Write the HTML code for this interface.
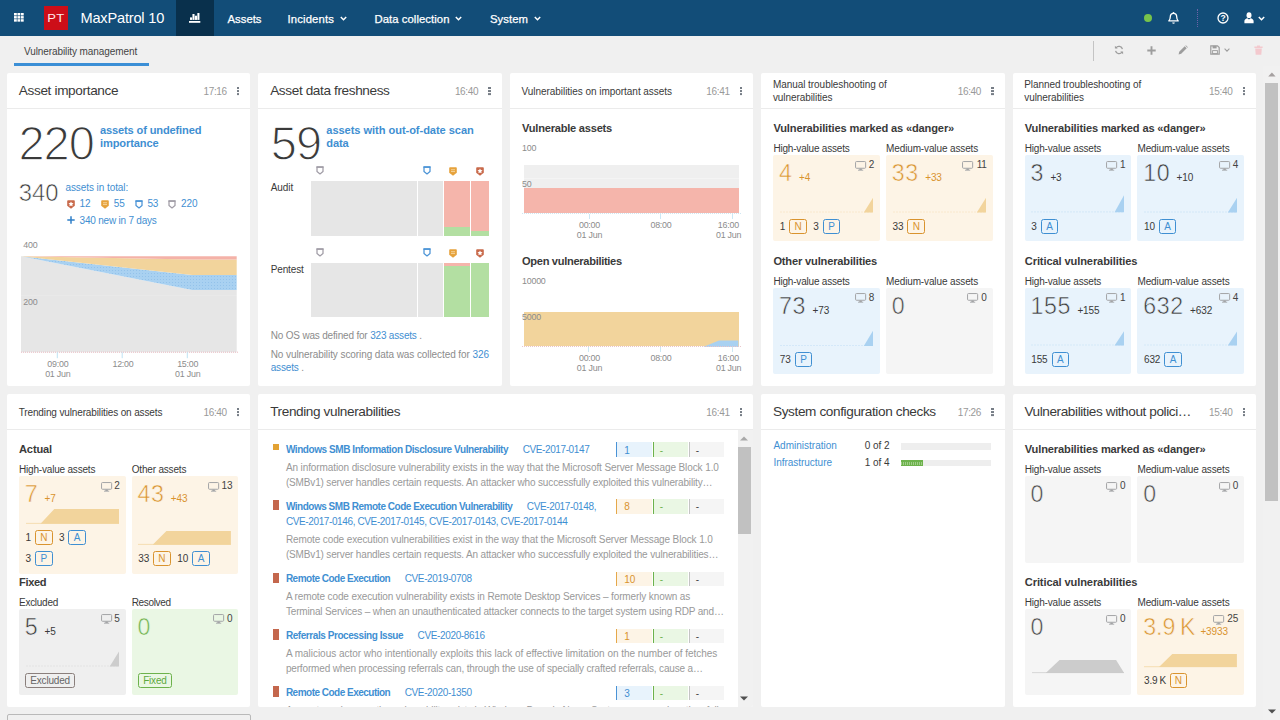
<!DOCTYPE html>
<html lang="en"><head><meta charset="utf-8"><title>MaxPatrol 10 - Vulnerability management</title>
<style>
*{box-sizing:border-box}
html,body{margin:0;padding:0}
body{width:1280px;height:720px;overflow:hidden;background:#f0f0f0;font-family:"Liberation Sans",sans-serif;color:#3a3a3a;position:relative}
.a{position:absolute;white-space:nowrap;display:block}
.t{font-size:10.0px;font-weight:400;letter-spacing:-0.12px;line-height:12px}.tb{font-size:10.0px;font-weight:700;letter-spacing:-0.12px;line-height:12px}.ax{font-size:8.9px;font-weight:400;letter-spacing:-0.22px;line-height:10px}.h{font-size:11.1px;font-weight:700;letter-spacing:-0.25px;line-height:14px}.ttl{font-size:13.6px;font-weight:400;letter-spacing:-0.3px;line-height:18px}.n45{font-size:47px;font-weight:400;letter-spacing:0px;line-height:50px}.n24{font-size:23.8px;font-weight:400;letter-spacing:0px;line-height:28px}.n22{font-size:23.2px;font-weight:400;letter-spacing:0.6px;line-height:26px}.nav{font-size:11.3px;font-weight:400;letter-spacing:-0.2px;line-height:14px}.brand{font-size:14.6px;font-weight:400;letter-spacing:-0.45px;line-height:20px}
#nav{position:absolute;left:0;top:0;width:1280px;height:36px;background:#124d78}
#tabs{position:absolute;left:0;top:36px;width:1280px;height:30px;background:#f0f0f0}
.card{position:absolute;background:#fff;border-radius:2px;overflow:hidden}
.chd{position:absolute;left:0;top:0;right:0;height:36px;border-bottom:1px solid #ebebeb}
.kebab{width:2.4px;height:2.2px;background:#767d86;box-shadow:0 3.05px 0 #767d86,0 6.1px 0 #767d86}
.bdg{border:1px solid;border-radius:2.5px;font-size:10px;line-height:13.6px;text-align:center;letter-spacing:0;background:transparent}
.lnk{color:#3f8fd2}
.cve{font-weight:400;margin-left:14.5px}
</style></head><body>

<nav id="nav">
<svg class="a" style="left:14.2px;top:13.3px" width="10" height="9" viewBox="0 0 10 9"><g fill="#fff"><rect x="0" y="0" width="2.8" height="2.45"/><rect x="3.45" y="0" width="2.8" height="2.45"/><rect x="6.9" y="0" width="2.8" height="2.45"/><rect x="0" y="3.1" width="2.8" height="2.45"/><rect x="3.45" y="3.1" width="2.8" height="2.45"/><rect x="6.9" y="3.1" width="2.8" height="2.45"/><rect x="0" y="6.2" width="2.8" height="2.45"/><rect x="3.45" y="6.2" width="2.8" height="2.45"/><rect x="6.9" y="6.2" width="2.8" height="2.45"/></g></svg>
<div class="a" style="left:44px;top:6px;width:24px;height:24px;background:#cd0e18"><span class="a" style="left:0;top:6.5px;width:24px;text-align:center;color:#ffeceb;font-size:10.4px;font-weight:400;line-height:12px;letter-spacing:.3px;transform:scaleX(1.25)">PT</span></div>
<span class="a brand" style="left:80.5px;top:8px;letter-spacing:-0.20px;color:#fff;">MaxPatrol 10</span>
<div class="a " style="left:176.0px;top:0.0px;width:38.0px;height:36.0px;background:#09304c;"></div>
<svg class="a" style="left:189.0px;top:13.0px" width="12" height="10" viewBox="0 0 12 10"><g fill="#fff"><rect x="1" y="4.4" width="2.1" height="2.5"/><rect x="3.45" y="1" width="2.1" height="5.9"/><rect x="5.9" y="2.7" width="2.1" height="4.2"/><rect x="8.35" y="0" width="2.1" height="6.9"/><rect x="0" y="8" width="11.3" height="1.8"/></g></svg>
<span class="a nav" style="left:227.5px;top:12px;letter-spacing:0.02px;color:#fff;-webkit-text-stroke:.25px #fff;">Assets</span>
<span class="a nav" style="left:287.5px;top:12px;letter-spacing:0.14px;color:#fff;-webkit-text-stroke:.25px #fff;">Incidents</span>
<span class="a nav" style="left:374.5px;top:12px;letter-spacing:0.06px;color:#fff;-webkit-text-stroke:.25px #fff;">Data collection</span>
<span class="a nav" style="left:490.0px;top:12px;letter-spacing:0.05px;color:#fff;-webkit-text-stroke:.25px #fff;">System</span>
<svg class="a" style="left:339.5px;top:15.5px" width="7" height="5" viewBox="0 0 7 5"><path d="M.8 1l2.7 2.7L6.2 1" fill="none" stroke="#fff" stroke-width="1.5"/></svg>
<svg class="a" style="left:455.0px;top:15.5px" width="7" height="5" viewBox="0 0 7 5"><path d="M.8 1l2.7 2.7L6.2 1" fill="none" stroke="#fff" stroke-width="1.5"/></svg>
<svg class="a" style="left:533.5px;top:15.5px" width="7" height="5" viewBox="0 0 7 5"><path d="M.8 1l2.7 2.7L6.2 1" fill="none" stroke="#fff" stroke-width="1.5"/></svg>
<div class="a" style="left:1143.8px;top:13.8px;width:8.5px;height:8.5px;border-radius:50%;background:#77c34b"></div>
<svg class="a" style="left:1167.5px;top:11.5px" width="11" height="13" viewBox="0 0 11 13"><path d="M5.5 1.3c-2 0-3.2 1.5-3.2 3.4 0 2.4-.7 3.4-1.5 4.2h9.4c-.8-.8-1.5-1.8-1.5-4.2 0-1.9-1.2-3.4-3.2-3.4z" fill="none" stroke="#fff" stroke-width="1.3" stroke-linejoin="round"/><circle cx="5.5" cy="1" r=".9" fill="#fff"/><path d="M4.2 10.4a1.3 1.3 0 0 0 2.6 0z" fill="#fff"/></svg>
<div class="a" style="left:1197px;top:9px;width:0;height:18px;border-left:1px dotted #6d62a8"></div>
<svg class="a" style="left:1217.0px;top:12.0px" width="12" height="12" viewBox="0 0 12 12"><circle cx="6" cy="6" r="5" fill="none" stroke="#fff" stroke-width="1.3"/><text x="6" y="9" text-anchor="middle" font-family="Liberation Sans,sans-serif" font-size="8.5" font-weight="700" fill="#fff">?</text></svg>
<svg class="a" style="left:1244.0px;top:12.0px" width="10" height="12" viewBox="0 0 10 12"><ellipse cx="5" cy="3.2" rx="2.5" ry="2.9" fill="#fff"/><path d="M.4 11.2V9.1c0-1.6 1.6-2.6 3-2.9L5 7.5l1.6-1.3c1.4.3 3 1.3 3 2.9v2.1z" fill="#fff"/></svg>
<svg class="a" style="left:1257.8px;top:15.5px" width="7" height="5" viewBox="0 0 7 5"><path d="M.8 1l2.7 2.7L6.2 1" fill="none" stroke="#fff" stroke-width="1.5"/></svg>
</nav>
<div id="tabs">
<span class="a t" style="left:24.0px;top:10px;letter-spacing:-0.09px;color:#444;">Vulnerability management</span>
<div class="a " style="left:14.0px;top:27.0px;width:135.0px;height:3.0px;background:#3b8fd6;"></div>
<div class="a " style="left:1093.0px;top:5.0px;width:1.0px;height:20.0px;background:#c4c4c4;"></div>
<svg class="a" style="left:1114.0px;top:9.4px" width="10" height="10" viewBox="0 0 10 10"><path d="M8.4 4.2A3.5 3.5 0 0 0 2 3M1.6 5.8A3.5 3.5 0 0 0 8 7" fill="none" stroke="#9d9d9d" stroke-width="1.3"/><path d="M.9.8v2.8h2.8zM9.1 9.2V6.4H6.3z" fill="#9d9d9d"/></svg>
<svg class="a" style="left:1146.5px;top:9.9px" width="9" height="9" viewBox="0 0 9 9"><path d="M4.5.3v8.4M.3 4.5h8.4" stroke="#9d9d9d" stroke-width="1.9"/></svg>
<svg class="a" style="left:1177.5px;top:9.4px" width="10" height="10" viewBox="0 0 10 10"><path d="M.6 9.4l.6-2.6L6.7 1.3l2 2L3.2 8.8zM7.4.7l.5-.4 2 2-.5.4z" fill="#9d9d9d"/></svg>
<svg class="a" style="left:1210.0px;top:9.4px" width="10" height="10" viewBox="0 0 10 10"><path d="M.8.8h6.7l1.7 1.7v6.7H.8z" fill="none" stroke="#9d9d9d" stroke-width="1.2"/><rect x="2.6" y=".8" width="4" height="2.6" fill="#9d9d9d"/><rect x="2.6" y="5.6" width="4.8" height="3" fill="none" stroke="#9d9d9d" stroke-width=".9"/></svg>
<svg class="a" style="left:1224.0px;top:12.4px" width="6" height="4" viewBox="0 0 6 4"><path d="M.6.7L3 3.1 5.4.7" fill="none" stroke="#9d9d9d" stroke-width="1.1"/></svg>
<svg class="a" style="left:1253.5px;top:8.9px" width="9" height="10" viewBox="0 0 9 10"><path d="M.4 1.6h8.2v1.3H.4zM3 .4h3v1.2H3zM1.2 3.4h6.6L7.3 9.7H1.7z" fill="#f3c9ce"/></svg>
</div>
<section class="card" style="left:7px;top:73px;width:243.4px;height:313px">
<header class="chd"></header>
<span class="a ttl" style="left:11.8px;top:9px;letter-spacing:-0.35px;color:#3a3a3a;">Asset importance</span>
<span class="a t" style="right:23.6px;top:13px;color:#999;letter-spacing:-.35px;">17:16</span>
<i class="a kebab" style="left:230.0px;top:13.9px"></i>
<span class="a n45" style="left:11.4px;top:46px;color:#3a3a3a;-webkit-text-stroke:1.3px #fff;letter-spacing:-1px;transform:scaleY(1.03);transform-origin:0 41px;">220</span>
<span class="a h" style="left:93.0px;top:50px;letter-spacing:-0.15px;color:#3f8fd2;">assets of undefined</span>
<span class="a h" style="left:93.0px;top:63px;letter-spacing:-0.12px;color:#3f8fd2;">importance</span>
<span class="a n24" style="left:11.8px;top:106px;color:#3a3a3a;-webkit-text-stroke:.6px #fff;">340</span>
<span class="a t" style="left:58.4px;top:109px;letter-spacing:-0.07px;color:#3f8fd2;">assets in total:</span>
<svg class="a" style="left:59.8px;top:127.4px" width="8" height="9" viewBox="0 0 8 9"><path d="M.2 .8L1 .2h6l.8.6v4.9L4 8.7.2 5.7z" fill="#c8694a"/><path d="M4 1.5l.8 1.6 1.75.2-1.3 1.2.35 1.75L4 5.4l-1.6.85.35-1.75-1.3-1.2 1.75-.2z" fill="#fff"/></svg>
<span class="a t" style="left:72.6px;top:125px;color:#3f8fd2;">12</span>
<svg class="a" style="left:94.0px;top:127.4px" width="8" height="9" viewBox="0 0 8 9"><path d="M.2 .8L1 .2h6l.8.6v4.9L4 8.7.2 5.7z" fill="#e6a23c"/><path d="M2 3.2l1-.9 1 .9 1-.9 1 .9M2 5l1-.9 1 .9 1-.9 1 .9" fill="none" stroke="#fbe6bf" stroke-width=".7"/></svg>
<span class="a t" style="left:106.8px;top:125px;color:#3f8fd2;">55</span>
<svg class="a" style="left:128.0px;top:127.2px" width="8" height="9" viewBox="0 0 8 9"><path d="M1 1.1h6v4.5L4 7.9 1 5.6z" fill="#fff" stroke="#4a93d6" stroke-width="1.25" stroke-linejoin="round"/><path d="M.4 1h7.2" stroke="#4a93d6" stroke-width="1.6"/></svg>
<span class="a t" style="left:140.4px;top:125px;color:#3f8fd2;">53</span>
<svg class="a" style="left:161.2px;top:127.2px" width="8" height="9" viewBox="0 0 8 9"><path d="M1 1.1h6v4.5L4 7.9 1 5.6z" fill="#fff" stroke="#a09ca6" stroke-width="1.25" stroke-linejoin="round"/><path d="M.4 1h7.2" stroke="#a09ca6" stroke-width="1.6"/></svg>
<span class="a t" style="left:174.0px;top:125px;color:#3f8fd2;">220</span>
<svg class="a" style="left:60.0px;top:143.3px" width="8" height="8" viewBox="0 0 8 8"><path d="M4 .3v7.4M.3 4h7.4" stroke="#2f7fc8" stroke-width="1.5"/></svg>
<span class="a t" style="left:72.6px;top:142px;letter-spacing:-0.21px;color:#3f8fd2;">340 new in 7 days</span>
<svg class="a" style="left:14.0px;top:157.0px" width="218" height="130" viewBox="0 0 218 130"><defs><pattern id="dots" width="3" height="3" patternUnits="userSpaceOnUse"><rect width="3" height="3" fill="#a9d1f1"/><rect x="1" y="1" width="1" height="1" fill="#93c2ea"/></pattern></defs><path d="M0 122.2V26.2L171.2 60.1H215.7V122.2z" fill="#e6e6e6"/><path d="M0 26.2L171.2 45.1H215.7V60.1H171.2z" fill="url(#dots)"/><path d="M0 26.2L171.2 29.6H215.7V45.1H171.2z" fill="#f2d49c"/><path d="M0 26.2H215.7V29.6H171.2z" fill="#f4b2a8"/><path d="M-2 65.7H217.7" stroke="#fff" stroke-opacity=".15" stroke-width="1"/><path d="M0 122.2H217.7" stroke="#e9b8c0" stroke-width="1" stroke-dasharray="1 1"/><path d="M36.3 122.2v6" stroke="#bfe3f4" stroke-width="1"/><path d="M101.2 122.2v6" stroke="#bfe3f4" stroke-width="1"/><path d="M166.3 122.2v6" stroke="#bfe3f4" stroke-width="1"/></svg>
<span class="a ax" style="left:16.3px;top:167px;color:#8c8c8c;">400</span>
<span class="a ax" style="left:16.3px;top:224px;color:#8c8c8c;">200</span>
<span class="a ax" style="left:10.8px;width:80px;text-align:center;top:286px;color:#8c8c8c;">09:00</span>
<span class="a ax" style="left:10.8px;width:80px;text-align:center;top:296px;color:#8c8c8c;">01 Jun</span>
<span class="a ax" style="left:76.0px;width:80px;text-align:center;top:286px;color:#8c8c8c;">12:00</span>
<span class="a ax" style="left:140.7px;width:80px;text-align:center;top:286px;color:#8c8c8c;">15:00</span>
<span class="a ax" style="left:140.7px;width:80px;text-align:center;top:296px;color:#8c8c8c;">01 Jun</span>
</section>
<section class="card" style="left:258.4px;top:73px;width:243.4px;height:313px">
<header class="chd"></header>
<span class="a ttl" style="left:11.8px;top:9px;letter-spacing:-0.38px;color:#3a3a3a;">Asset data freshness</span>
<span class="a t" style="right:23.6px;top:13px;color:#999;letter-spacing:-.35px;">16:40</span>
<i class="a kebab" style="left:230.0px;top:13.9px"></i>
<span class="a n45" style="left:12.4px;top:46px;color:#3a3a3a;-webkit-text-stroke:1.3px #fff;letter-spacing:-1px;transform:scaleY(1.03);transform-origin:0 41px;">59</span>
<span class="a h" style="left:67.9px;top:50px;letter-spacing:-0.06px;color:#3f8fd2;">assets with out-of-date scan</span>
<span class="a h" style="left:67.9px;top:63px;letter-spacing:-0.15px;color:#3f8fd2;">data</span>
<svg class="a" style="left:57.4px;top:93.0px" width="8" height="9" viewBox="0 0 8 9"><path d="M1 1.1h6v4.5L4 7.9 1 5.6z" fill="#fff" stroke="#a09ca6" stroke-width="1.25" stroke-linejoin="round"/><path d="M.4 1h7.2" stroke="#a09ca6" stroke-width="1.6"/></svg>
<svg class="a" style="left:164.4px;top:93.0px" width="8" height="9" viewBox="0 0 8 9"><path d="M1 1.1h6v4.5L4 7.9 1 5.6z" fill="#fff" stroke="#4a93d6" stroke-width="1.25" stroke-linejoin="round"/><path d="M.4 1h7.2" stroke="#4a93d6" stroke-width="1.6"/></svg>
<svg class="a" style="left:190.2px;top:93.9px" width="8" height="9" viewBox="0 0 8 9"><path d="M.2 .8L1 .2h6l.8.6v4.9L4 8.7.2 5.7z" fill="#e6a23c"/><path d="M2 3.2l1-.9 1 .9 1-.9 1 .9M2 5l1-.9 1 .9 1-.9 1 .9" fill="none" stroke="#fbe6bf" stroke-width=".7"/></svg>
<svg class="a" style="left:217.4px;top:93.9px" width="8" height="9" viewBox="0 0 8 9"><path d="M.2 .8L1 .2h6l.8.6v4.9L4 8.7.2 5.7z" fill="#c8694a"/><path d="M4 1.5l.8 1.6 1.75.2-1.3 1.2.35 1.75L4 5.4l-1.6.85.35-1.75-1.3-1.2 1.75-.2z" fill="#fff"/></svg>
<svg class="a" style="left:57.4px;top:175.2px" width="8" height="9" viewBox="0 0 8 9"><path d="M1 1.1h6v4.5L4 7.9 1 5.6z" fill="#fff" stroke="#a09ca6" stroke-width="1.25" stroke-linejoin="round"/><path d="M.4 1h7.2" stroke="#a09ca6" stroke-width="1.6"/></svg>
<svg class="a" style="left:164.4px;top:175.2px" width="8" height="9" viewBox="0 0 8 9"><path d="M1 1.1h6v4.5L4 7.9 1 5.6z" fill="#fff" stroke="#4a93d6" stroke-width="1.25" stroke-linejoin="round"/><path d="M.4 1h7.2" stroke="#4a93d6" stroke-width="1.6"/></svg>
<svg class="a" style="left:190.2px;top:176.1px" width="8" height="9" viewBox="0 0 8 9"><path d="M.2 .8L1 .2h6l.8.6v4.9L4 8.7.2 5.7z" fill="#e6a23c"/><path d="M2 3.2l1-.9 1 .9 1-.9 1 .9M2 5l1-.9 1 .9 1-.9 1 .9" fill="none" stroke="#fbe6bf" stroke-width=".7"/></svg>
<svg class="a" style="left:217.4px;top:176.1px" width="8" height="9" viewBox="0 0 8 9"><path d="M.2 .8L1 .2h6l.8.6v4.9L4 8.7.2 5.7z" fill="#c8694a"/><path d="M4 1.5l.8 1.6 1.75.2-1.3 1.2.35 1.75L4 5.4l-1.6.85.35-1.75-1.3-1.2 1.75-.2z" fill="#fff"/></svg>
<span class="a t" style="left:12.4px;top:109px;letter-spacing:-0.08px;color:#3a3a3a;">Audit</span>
<span class="a t" style="left:12.4px;top:191px;letter-spacing:-0.15px;color:#3a3a3a;">Pentest</span>
<div class="a " style="left:52.6px;top:108.0px;width:106.0px;height:55.0px;background:#e6e6e6;"></div>
<div class="a " style="left:159.6px;top:108.0px;width:25.0px;height:55.0px;background:#e6e6e6;"></div>
<div class="a " style="left:185.6px;top:108.0px;width:25.8px;height:46.0px;background:#f5b5ab;"></div>
<div class="a " style="left:185.6px;top:154.0px;width:25.8px;height:9.0px;background:#b3dfa2;"></div>
<div class="a " style="left:212.8px;top:108.0px;width:17.8px;height:50.0px;background:#f5b5ab;"></div>
<div class="a " style="left:212.8px;top:158.0px;width:17.8px;height:5.0px;background:#b3dfa2;"></div>
<div class="a " style="left:52.6px;top:190.0px;width:106.0px;height:54.0px;background:#e6e6e6;"></div>
<div class="a " style="left:159.6px;top:190.0px;width:25.0px;height:54.0px;background:#e6e6e6;"></div>
<div class="a " style="left:185.6px;top:190.0px;width:25.8px;height:3.0px;background:#f5b5ab;"></div>
<div class="a " style="left:185.6px;top:193.0px;width:25.8px;height:51.0px;background:#b3dfa2;"></div>
<div class="a " style="left:212.8px;top:190.0px;width:17.8px;height:54.0px;background:#b3dfa2;"></div>
<span class="a t" style="left:12.3px;top:257px;letter-spacing:-0.18px;color:#8c8c8c;">No OS was defined for <span class="lnk">323 assets</span> .</span>
<span class="a t" style="left:12.3px;top:276px;letter-spacing:-0.08px;color:#8c8c8c;">No vulnerability scoring data was collected for <span class="lnk">326</span></span>
<span class="a t" style="left:12.3px;top:289px;letter-spacing:-0.15px;color:#8c8c8c;"><span class="lnk">assets</span> .</span>
</section>
<section class="card" style="left:509.8px;top:73px;width:243.4px;height:313px">
<header class="chd"></header>
<span class="a t" style="left:11.7px;top:13px;letter-spacing:-0.04px;color:#3a3a3a;">Vulnerabilities on important assets</span>
<span class="a t" style="right:23.6px;top:13px;color:#999;letter-spacing:-.35px;">16:41</span>
<i class="a kebab" style="left:230.0px;top:13.9px"></i>
<span class="a h" style="left:12.2px;top:48px;letter-spacing:-0.23px;color:#3a3a3a;">Vulnerable assets</span>
<span class="a ax" style="left:12.2px;top:70px;color:#8c8c8c;">100</span>
<div class="a " style="left:14.1px;top:92.2px;width:214.9px;height:22.8px;background:#efefef;"></div>
<div class="a " style="left:14.1px;top:115.0px;width:214.9px;height:25.3px;background:#f5b5ab;"></div>
<div class="a " style="left:12.2px;top:105.3px;width:219.0px;height:1.0px;background:rgba(255,255,255,.3);"></div>
<span class="a ax" style="left:12.2px;top:106px;color:#8c8c8c;">50</span>
<div class="a" style="left:12.2px;top:140.0px;width:219px;height:0;border-top:1px dotted #cfe6f2"></div>
<div class="a " style="left:79.0px;top:140.5px;width:1.0px;height:5.5px;background:#cbe8f5;"></div>
<div class="a " style="left:150.5px;top:140.5px;width:1.0px;height:5.5px;background:#cbe8f5;"></div>
<div class="a " style="left:221.9px;top:140.5px;width:1.0px;height:5.5px;background:#cbe8f5;"></div>
<span class="a ax" style="left:39.7px;width:80px;text-align:center;top:147px;color:#8c8c8c;">00:00</span>
<span class="a ax" style="left:39.7px;width:80px;text-align:center;top:157px;color:#8c8c8c;">01 Jun</span>
<span class="a ax" style="left:111.2px;width:80px;text-align:center;top:147px;color:#8c8c8c;">08:00</span>
<span class="a ax" style="left:178.5px;width:80px;text-align:center;top:147px;color:#8c8c8c;">16:00</span>
<span class="a ax" style="left:178.8px;width:80px;text-align:center;top:157px;color:#8c8c8c;">01 Jun</span>
<span class="a h" style="left:12.2px;top:181px;letter-spacing:-0.31px;color:#3a3a3a;">Open vulnerabilities</span>
<span class="a ax" style="left:12.2px;top:203px;color:#8c8c8c;">10000</span>
<div class="a " style="left:14.1px;top:238.8px;width:214.9px;height:34.6px;background:#f2d49c;"></div>
<svg class="a" style="left:193.6px;top:266.5px" width="36" height="7" viewBox="0 0 36 7"><path d="M0 7L16 .5H35.4V7z" fill="#a9d1f1"/></svg>
<span class="a ax" style="left:12.2px;top:239px;color:#8c8c8c;">5000</span>
<div class="a" style="left:12.2px;top:273.2px;width:219px;height:0;border-top:1px dotted #e9c6cc"></div>
<div class="a " style="left:78.7px;top:273.8px;width:1.0px;height:5.5px;background:#cbe8f5;"></div>
<div class="a " style="left:150.7px;top:273.8px;width:1.0px;height:5.5px;background:#cbe8f5;"></div>
<div class="a " style="left:222.0px;top:273.8px;width:1.0px;height:5.5px;background:#cbe8f5;"></div>
<span class="a ax" style="left:39.7px;width:80px;text-align:center;top:280px;color:#8c8c8c;">00:00</span>
<span class="a ax" style="left:39.7px;width:80px;text-align:center;top:290px;color:#8c8c8c;">01 Jun</span>
<span class="a ax" style="left:111.2px;width:80px;text-align:center;top:280px;color:#8c8c8c;">08:00</span>
<span class="a ax" style="left:178.5px;width:80px;text-align:center;top:280px;color:#8c8c8c;">16:00</span>
<span class="a ax" style="left:178.8px;width:80px;text-align:center;top:290px;color:#8c8c8c;">01 Jun</span>
</section>
<section class="card" style="left:761.2px;top:73px;width:243.4px;height:313px">
<header class="chd"></header>
<span class="a t" style="left:11.7px;top:6px;letter-spacing:-0.05px;color:#3a3a3a;">Manual troubleshooting of</span>
<span class="a t" style="left:11.7px;top:19px;letter-spacing:-0.07px;color:#3a3a3a;">vulnerabilities</span>
<span class="a t" style="right:23.6px;top:13px;color:#999;letter-spacing:-.35px;">16:40</span>
<i class="a kebab" style="left:230.0px;top:13.9px"></i>
<span class="a h" style="left:12.2px;top:48px;letter-spacing:-0.15px;color:#3a3a3a;">Vulnerabilities marked as «danger»</span>
<span class="a t" style="left:12.2px;top:70px;letter-spacing:-0.19px;color:#3a3a3a;">High-value assets</span>
<span class="a t" style="left:124.9px;top:70px;letter-spacing:-0.13px;color:#3a3a3a;">Medium-value assets</span>
<div class="a " style="left:12.2px;top:82.2px;width:106.5px;height:86.2px;background:#fdf4e6;border-radius:2px;"></div>
<span class="a n22" style="left:17.9px;top:87px;color:#d9932e;-webkit-text-stroke:.55px #fdf4e6;">4</span>
<span class="a t" style="left:37.8px;top:99px;color:#d9932e;">+4</span>
<span class="a t" style="right:130.5px;top:86px;color:#444;">2</span>
<svg class="a" style="left:93.6px;top:88.3px" width="12" height="10" viewBox="0 0 12 10"><rect x="0.55" y="0.55" width="10.1" height="6.7" rx="0.9" fill="none" stroke="#a3a4a6" stroke-width="1"/><path d="M3 9.2h5.2" stroke="#a3a4a6" stroke-width=".9"/><path d="M4.6 7.4l-.4 1.5h2.8l-.4-1.5z" fill="#a3a4a6"/></svg>
<svg class="a" style="left:18.6px;top:123.2px" width="93.4" height="17.4"><path d="M83.8 16.4L93.4 1V16.4z" fill="#f2d49c"/><path d="M0 16.0H93.4" stroke="#f2d49c" stroke-width=".8" opacity=".4" stroke-dasharray="2 1"/></svg>
<span class="a t" style="left:18.6px;top:148px;color:#3a3a3a;">1</span>
<span class="a bdg" style="left:28.1px;top:145.9px;width:17.6px;height:14.7px;border-color:#d9932e;color:#d9932e;">N</span>
<span class="a t" style="left:52.1px;top:148px;color:#3a3a3a;">3</span>
<span class="a bdg" style="left:61.5px;top:145.9px;width:17.6px;height:14.7px;border-color:#3f8fd2;color:#3f8fd2;">P</span>
<div class="a " style="left:124.9px;top:82.2px;width:106.5px;height:86.2px;background:#fdf4e6;border-radius:2px;"></div>
<span class="a n22" style="left:130.6px;top:87px;color:#d9932e;-webkit-text-stroke:.55px #fdf4e6;">33</span>
<span class="a t" style="left:164.0px;top:99px;color:#d9932e;">+33</span>
<span class="a t" style="right:17.8px;top:86px;color:#444;">11</span>
<svg class="a" style="left:200.9px;top:88.3px" width="12" height="10" viewBox="0 0 12 10"><rect x="0.55" y="0.55" width="10.1" height="6.7" rx="0.9" fill="none" stroke="#a3a4a6" stroke-width="1"/><path d="M3 9.2h5.2" stroke="#a3a4a6" stroke-width=".9"/><path d="M4.6 7.4l-.4 1.5h2.8l-.4-1.5z" fill="#a3a4a6"/></svg>
<svg class="a" style="left:131.4px;top:123.2px" width="93.4" height="17.4"><path d="M83.8 16.4L93.4 1V16.4z" fill="#f2d49c"/><path d="M0 16.0H93.4" stroke="#f2d49c" stroke-width=".8" opacity=".4" stroke-dasharray="2 1"/></svg>
<span class="a t" style="left:131.4px;top:148px;color:#3a3a3a;">33</span>
<span class="a bdg" style="left:146.3px;top:145.9px;width:17.6px;height:14.7px;border-color:#d9932e;color:#d9932e;">N</span>
<span class="a h" style="left:12.2px;top:181px;letter-spacing:-0.17px;color:#3a3a3a;">Other vulnerabilities</span>
<span class="a t" style="left:12.2px;top:203px;letter-spacing:-0.19px;color:#3a3a3a;">High-value assets</span>
<span class="a t" style="left:124.9px;top:203px;letter-spacing:-0.13px;color:#3a3a3a;">Medium-value assets</span>
<div class="a " style="left:12.2px;top:215.2px;width:106.5px;height:85.6px;background:#e8f3fc;border-radius:2px;"></div>
<span class="a n22" style="left:17.9px;top:220px;color:#3a3a3a;-webkit-text-stroke:.55px #e8f3fc;">73</span>
<span class="a t" style="left:51.3px;top:232px;color:#3a3a3a;">+73</span>
<span class="a t" style="right:130.5px;top:219px;color:#444;">8</span>
<svg class="a" style="left:93.6px;top:220.4px" width="12" height="10" viewBox="0 0 12 10"><rect x="0.55" y="0.55" width="10.1" height="6.7" rx="0.9" fill="none" stroke="#a3a4a6" stroke-width="1"/><path d="M3 9.2h5.2" stroke="#a3a4a6" stroke-width=".9"/><path d="M4.6 7.4l-.4 1.5h2.8l-.4-1.5z" fill="#a3a4a6"/></svg>
<svg class="a" style="left:18.6px;top:255.5px" width="93.4" height="17.9"><path d="M83.8 16.9L93.4 1V16.9z" fill="#a9d1f1"/><path d="M0 16.5H93.4" stroke="#a9d1f1" stroke-width=".8" opacity=".4" stroke-dasharray="2 1"/></svg>
<span class="a t" style="left:18.6px;top:281px;color:#3a3a3a;">73</span>
<span class="a bdg" style="left:33.5px;top:278.9px;width:17.6px;height:14.7px;border-color:#3f8fd2;color:#3f8fd2;">P</span>
<div class="a " style="left:124.9px;top:215.2px;width:106.5px;height:85.6px;background:#f5f5f5;border-radius:2px;"></div>
<span class="a n22" style="left:130.6px;top:220px;color:#4a4a4a;-webkit-text-stroke:.55px #f5f5f5;">0</span>
<span class="a t" style="right:17.8px;top:219px;color:#444;">0</span>
<svg class="a" style="left:206.3px;top:220.4px" width="12" height="10" viewBox="0 0 12 10"><rect x="0.55" y="0.55" width="10.1" height="6.7" rx="0.9" fill="none" stroke="#a3a4a6" stroke-width="1"/><path d="M3 9.2h5.2" stroke="#a3a4a6" stroke-width=".9"/><path d="M4.6 7.4l-.4 1.5h2.8l-.4-1.5z" fill="#a3a4a6"/></svg>
</section>
<section class="card" style="left:1012.6px;top:73px;width:243.4px;height:313px">
<header class="chd"></header>
<span class="a t" style="left:11.7px;top:6px;letter-spacing:-0.08px;color:#3a3a3a;">Planned troubleshooting of</span>
<span class="a t" style="left:11.7px;top:19px;letter-spacing:-0.07px;color:#3a3a3a;">vulnerabilities</span>
<span class="a t" style="right:23.6px;top:13px;color:#999;letter-spacing:-.35px;">15:40</span>
<i class="a kebab" style="left:230.0px;top:13.9px"></i>
<span class="a h" style="left:12.2px;top:48px;letter-spacing:-0.15px;color:#3a3a3a;">Vulnerabilities marked as «danger»</span>
<span class="a t" style="left:12.2px;top:70px;letter-spacing:-0.19px;color:#3a3a3a;">High-value assets</span>
<span class="a t" style="left:124.9px;top:70px;letter-spacing:-0.13px;color:#3a3a3a;">Medium-value assets</span>
<div class="a " style="left:12.2px;top:82.2px;width:106.5px;height:86.2px;background:#e8f3fc;border-radius:2px;"></div>
<span class="a n22" style="left:17.9px;top:87px;color:#3a3a3a;-webkit-text-stroke:.55px #e8f3fc;">3</span>
<span class="a t" style="left:37.8px;top:99px;color:#3a3a3a;">+3</span>
<span class="a t" style="right:130.5px;top:86px;color:#444;">1</span>
<svg class="a" style="left:93.6px;top:88.3px" width="12" height="10" viewBox="0 0 12 10"><rect x="0.55" y="0.55" width="10.1" height="6.7" rx="0.9" fill="none" stroke="#a3a4a6" stroke-width="1"/><path d="M3 9.2h5.2" stroke="#a3a4a6" stroke-width=".9"/><path d="M4.6 7.4l-.4 1.5h2.8l-.4-1.5z" fill="#a3a4a6"/></svg>
<svg class="a" style="left:18.6px;top:121.3px" width="93.2" height="19.3"><path d="M83.6 18.3L93.2 1V18.3z" fill="#a9d1f1"/><path d="M0 17.9H93.2" stroke="#a9d1f1" stroke-width=".8" opacity=".4" stroke-dasharray="2 1"/></svg>
<span class="a t" style="left:18.6px;top:148px;color:#3a3a3a;">3</span>
<span class="a bdg" style="left:28.1px;top:145.9px;width:17.6px;height:14.7px;border-color:#3f8fd2;color:#3f8fd2;">A</span>
<div class="a " style="left:124.9px;top:82.2px;width:106.5px;height:86.2px;background:#e8f3fc;border-radius:2px;"></div>
<span class="a n22" style="left:130.6px;top:87px;color:#3a3a3a;-webkit-text-stroke:.55px #e8f3fc;">10</span>
<span class="a t" style="left:164.0px;top:99px;color:#3a3a3a;">+10</span>
<span class="a t" style="right:17.8px;top:86px;color:#444;">4</span>
<svg class="a" style="left:206.4px;top:88.3px" width="12" height="10" viewBox="0 0 12 10"><rect x="0.55" y="0.55" width="10.1" height="6.7" rx="0.9" fill="none" stroke="#a3a4a6" stroke-width="1"/><path d="M3 9.2h5.2" stroke="#a3a4a6" stroke-width=".9"/><path d="M4.6 7.4l-.4 1.5h2.8l-.4-1.5z" fill="#a3a4a6"/></svg>
<svg class="a" style="left:131.4px;top:123.2px" width="93.4" height="17.4"><path d="M83.8 16.4L93.4 1V16.4z" fill="#a9d1f1"/><path d="M0 16.0H93.4" stroke="#a9d1f1" stroke-width=".8" opacity=".4" stroke-dasharray="2 1"/></svg>
<span class="a t" style="left:131.4px;top:148px;color:#3a3a3a;">10</span>
<span class="a bdg" style="left:146.3px;top:145.9px;width:17.6px;height:14.7px;border-color:#3f8fd2;color:#3f8fd2;">A</span>
<span class="a h" style="left:12.2px;top:181px;letter-spacing:-0.11px;color:#3a3a3a;">Critical vulnerabilities</span>
<span class="a t" style="left:12.2px;top:203px;letter-spacing:-0.19px;color:#3a3a3a;">High-value assets</span>
<span class="a t" style="left:124.9px;top:203px;letter-spacing:-0.13px;color:#3a3a3a;">Medium-value assets</span>
<div class="a " style="left:12.2px;top:215.2px;width:106.5px;height:85.6px;background:#e8f3fc;border-radius:2px;"></div>
<span class="a n22" style="left:17.9px;top:220px;color:#3a3a3a;-webkit-text-stroke:.55px #e8f3fc;">155</span>
<span class="a t" style="left:64.8px;top:232px;color:#3a3a3a;">+155</span>
<span class="a t" style="right:130.5px;top:219px;color:#444;">1</span>
<svg class="a" style="left:93.6px;top:220.4px" width="12" height="10" viewBox="0 0 12 10"><rect x="0.55" y="0.55" width="10.1" height="6.7" rx="0.9" fill="none" stroke="#a3a4a6" stroke-width="1"/><path d="M3 9.2h5.2" stroke="#a3a4a6" stroke-width=".9"/><path d="M4.6 7.4l-.4 1.5h2.8l-.4-1.5z" fill="#a3a4a6"/></svg>
<svg class="a" style="left:18.6px;top:257.0px" width="93.2" height="16.4"><path d="M83.6 15.4L93.2 1V15.4z" fill="#a9d1f1"/><path d="M0 15.0H93.2" stroke="#a9d1f1" stroke-width=".8" opacity=".4" stroke-dasharray="2 1"/></svg>
<span class="a t" style="left:18.6px;top:281px;color:#3a3a3a;">155</span>
<span class="a bdg" style="left:39.0px;top:278.9px;width:17.6px;height:14.7px;border-color:#3f8fd2;color:#3f8fd2;">A</span>
<div class="a " style="left:124.9px;top:215.2px;width:106.5px;height:85.6px;background:#e8f3fc;border-radius:2px;"></div>
<span class="a n22" style="left:130.6px;top:220px;color:#3a3a3a;-webkit-text-stroke:.55px #e8f3fc;">632</span>
<span class="a t" style="left:177.5px;top:232px;color:#3a3a3a;">+632</span>
<span class="a t" style="right:17.8px;top:219px;color:#444;">4</span>
<svg class="a" style="left:206.4px;top:220.4px" width="12" height="10" viewBox="0 0 12 10"><rect x="0.55" y="0.55" width="10.1" height="6.7" rx="0.9" fill="none" stroke="#a3a4a6" stroke-width="1"/><path d="M3 9.2h5.2" stroke="#a3a4a6" stroke-width=".9"/><path d="M4.6 7.4l-.4 1.5h2.8l-.4-1.5z" fill="#a3a4a6"/></svg>
<svg class="a" style="left:131.4px;top:257.0px" width="93.4" height="16.4"><path d="M83.8 15.4L93.4 1V15.4z" fill="#a9d1f1"/><path d="M0 15.0H93.4" stroke="#a9d1f1" stroke-width=".8" opacity=".4" stroke-dasharray="2 1"/></svg>
<span class="a t" style="left:131.4px;top:281px;color:#3a3a3a;">632</span>
<span class="a bdg" style="left:151.8px;top:278.9px;width:17.6px;height:14.7px;border-color:#3f8fd2;color:#3f8fd2;">A</span>
</section>
<section class="card" style="left:7px;top:394px;width:243.4px;height:313px">
<header class="chd"></header>
<span class="a t" style="left:11.7px;top:13px;letter-spacing:-0.13px;color:#3a3a3a;">Trending vulnerabilities on assets</span>
<span class="a t" style="right:23.6px;top:13px;color:#999;letter-spacing:-.35px;">16:40</span>
<i class="a kebab" style="left:230.0px;top:13.9px"></i>
<span class="a h" style="left:12.0px;top:48px;letter-spacing:-0.15px;color:#3a3a3a;">Actual</span>
<span class="a t" style="left:12.0px;top:70px;letter-spacing:-0.19px;color:#3a3a3a;">High-value assets</span>
<span class="a t" style="left:124.7px;top:70px;letter-spacing:-0.18px;color:#3a3a3a;">Other assets</span>
<div class="a " style="left:12.0px;top:82.2px;width:106.5px;height:97.4px;background:#fdf4e6;border-radius:2px;"></div>
<span class="a n22" style="left:17.7px;top:87px;color:#d9932e;-webkit-text-stroke:.55px #fdf4e6;">7</span>
<span class="a t" style="left:37.6px;top:99px;color:#d9932e;">+7</span>
<span class="a t" style="right:130.7px;top:86px;color:#444;">2</span>
<svg class="a" style="left:93.5px;top:88.3px" width="12" height="10" viewBox="0 0 12 10"><rect x="0.55" y="0.55" width="10.1" height="6.7" rx="0.9" fill="none" stroke="#a3a4a6" stroke-width="1"/><path d="M3 9.2h5.2" stroke="#a3a4a6" stroke-width=".9"/><path d="M4.6 7.4l-.4 1.5h2.8l-.4-1.5z" fill="#a3a4a6"/></svg>
<svg class="a" style="left:18.5px;top:115.2px" width="93.3" height="15.7"><path d="M0 14.7H14.5L28.3 0H93.3V14.7z" fill="#f2d49c"/><path d="M0 14.4H93.3" stroke="#f2d49c" stroke-width=".7"/></svg>
<span class="a t" style="left:18.5px;top:138px;color:#3a3a3a;">1</span>
<span class="a bdg" style="left:28.0px;top:135.9px;width:17.6px;height:14.7px;border-color:#d9932e;color:#d9932e;">N</span>
<span class="a t" style="left:52.0px;top:138px;color:#3a3a3a;">3</span>
<span class="a bdg" style="left:61.4px;top:135.9px;width:17.6px;height:14.7px;border-color:#3f8fd2;color:#3f8fd2;">A</span>
<span class="a t" style="left:18.5px;top:159px;color:#3a3a3a;">3</span>
<span class="a bdg" style="left:28.0px;top:157.1px;width:17.6px;height:14.7px;border-color:#3f8fd2;color:#3f8fd2;">P</span>
<div class="a " style="left:124.7px;top:82.2px;width:106.5px;height:97.4px;background:#fdf4e6;border-radius:2px;"></div>
<span class="a n22" style="left:130.4px;top:87px;color:#d9932e;-webkit-text-stroke:.55px #fdf4e6;">43</span>
<span class="a t" style="left:163.8px;top:99px;color:#d9932e;">+43</span>
<span class="a t" style="right:18.0px;top:86px;color:#444;">13</span>
<svg class="a" style="left:200.7px;top:88.3px" width="12" height="10" viewBox="0 0 12 10"><rect x="0.55" y="0.55" width="10.1" height="6.7" rx="0.9" fill="none" stroke="#a3a4a6" stroke-width="1"/><path d="M3 9.2h5.2" stroke="#a3a4a6" stroke-width=".9"/><path d="M4.6 7.4l-.4 1.5h2.8l-.4-1.5z" fill="#a3a4a6"/></svg>
<svg class="a" style="left:131.3px;top:137.0px" width="92.9" height="14.7"><path d="M0 13.7H14.7L28.4 0H92.9V13.7z" fill="#f2d49c"/><path d="M0 13.4H92.9" stroke="#f2d49c" stroke-width=".7"/></svg>
<span class="a t" style="left:131.3px;top:159px;color:#3a3a3a;">33</span>
<span class="a bdg" style="left:146.2px;top:157.1px;width:17.6px;height:14.7px;border-color:#d9932e;color:#d9932e;">N</span>
<span class="a t" style="left:170.2px;top:159px;color:#3a3a3a;">10</span>
<span class="a bdg" style="left:185.2px;top:157.1px;width:17.6px;height:14.7px;border-color:#3f8fd2;color:#3f8fd2;">A</span>
<span class="a h" style="left:12.0px;top:181px;letter-spacing:-0.36px;color:#3a3a3a;">Fixed</span>
<span class="a t" style="left:12.0px;top:203px;letter-spacing:-0.27px;color:#3a3a3a;">Excluded</span>
<span class="a t" style="left:124.7px;top:203px;letter-spacing:-0.34px;color:#3a3a3a;">Resolved</span>
<div class="a " style="left:12.0px;top:215.0px;width:106.5px;height:85.5px;background:#efefef;border-radius:2px;"></div>
<span class="a n22" style="left:17.7px;top:220px;color:#3a3a3a;-webkit-text-stroke:.55px #efefef;">5</span>
<span class="a t" style="left:37.6px;top:232px;color:#3a3a3a;">+5</span>
<span class="a t" style="right:130.7px;top:219px;color:#444;">5</span>
<svg class="a" style="left:93.5px;top:220.2px" width="12" height="10" viewBox="0 0 12 10"><rect x="0.55" y="0.55" width="10.1" height="6.7" rx="0.9" fill="none" stroke="#a3a4a6" stroke-width="1"/><path d="M3 9.2h5.2" stroke="#a3a4a6" stroke-width=".9"/><path d="M4.6 7.4l-.4 1.5h2.8l-.4-1.5z" fill="#a3a4a6"/></svg>
<svg class="a" style="left:18.5px;top:256.0px" width="93.3" height="17.4"><path d="M83.7 16.4L93.3 1V16.4z" fill="#cdcdcd"/><path d="M0 16.0H93.3" stroke="#cdcdcd" stroke-width=".8" opacity=".4" stroke-dasharray="2 1"/></svg>
<span class="a bdg" style="left:18.3px;top:279.3px;width:49.6px;height:14.4px;border-color:#8a7f7c;color:#666;letter-spacing:-.2px;">Excluded</span>
<div class="a " style="left:124.7px;top:215.0px;width:106.5px;height:85.5px;background:#eaf7e4;border-radius:2px;"></div>
<span class="a n22" style="left:130.4px;top:220px;color:#72b34f;-webkit-text-stroke:.55px #eaf7e4;">0</span>
<span class="a t" style="right:18.0px;top:219px;color:#444;">0</span>
<svg class="a" style="left:206.2px;top:220.2px" width="12" height="10" viewBox="0 0 12 10"><rect x="0.55" y="0.55" width="10.1" height="6.7" rx="0.9" fill="none" stroke="#a3a4a6" stroke-width="1"/><path d="M3 9.2h5.2" stroke="#a3a4a6" stroke-width=".9"/><path d="M4.6 7.4l-.4 1.5h2.8l-.4-1.5z" fill="#a3a4a6"/></svg>
<span class="a bdg" style="left:131.1px;top:279.3px;width:33.6px;height:14.4px;border-color:#6db24c;color:#5ea83e;letter-spacing:-.2px;">Fixed</span>
</section>
<section class="card" style="left:258.4px;top:394px;width:494.8px;height:313px">
<header class="chd"></header>
<span class="a ttl" style="left:11.8px;top:9px;letter-spacing:-0.39px;color:#3a3a3a;">Trending vulnerabilities</span>
<span class="a t" style="right:23.6px;top:13px;color:#999;letter-spacing:-.35px;">16:41</span>
<i class="a kebab" style="left:481.4px;top:13.9px"></i>
<div class="a " style="left:15.0px;top:50.0px;width:5.4px;height:6.1px;background:#e3a233;"></div>
<span class="a tb" style="left:27.5px;top:50px;color:#3f8fd2;letter-spacing:-0.43px;">Windows SMB Information Disclosure Vulnerability<span class="cve" style="letter-spacing:-0.39px">CVE-2017-0147</span></span>
<div class="a " style="left:357.6px;top:48.3px;width:35.9px;height:14.7px;background:#e8f3fc;border-left:1.2px solid #4a93d6;"></div>
<span class="a t" style="left:365.8px;top:51px;color:#3f8fd2;">1</span>
<div class="a " style="left:394.2px;top:48.3px;width:35.4px;height:14.7px;background:#eaf7e4;border-left:1.2px solid #6db24c;"></div>
<span class="a t" style="left:401.3px;top:51px;color:#6db24c;">-</span>
<div class="a " style="left:430.3px;top:48.3px;width:35.2px;height:14.7px;background:#f5f5f5;border-left:1.2px solid #c4c4c4;"></div>
<span class="a t" style="left:437.4px;top:51px;color:#444;">-</span>
<span class="a t" style="left:27.5px;top:68px;letter-spacing:-0.10px;color:#999;">An information disclosure vulnerability exists in the way that the Microsoft Server Message Block 1.0</span>
<span class="a t" style="left:27.5px;top:83px;letter-spacing:-0.15px;color:#999;">(SMBv1) server handles certain requests. An attacker who successfully exploited this vulnerability…</span>
<div class="a " style="left:15.0px;top:105.8px;width:5.4px;height:10.3px;background:#c4674d;"></div>
<span class="a tb" style="left:27.5px;top:107px;color:#3f8fd2;letter-spacing:-0.48px;">Windows SMB Remote Code Execution Vulnerability<span class="cve" style="letter-spacing:-0.38px">CVE-2017-0148,</span></span>
<div class="a " style="left:357.6px;top:104.9px;width:35.9px;height:14.7px;background:#fdf4e6;border-left:1.2px solid #e5a84a;"></div>
<span class="a t" style="left:365.8px;top:107px;color:#d9932e;">8</span>
<div class="a " style="left:394.2px;top:104.9px;width:35.4px;height:14.7px;background:#eaf7e4;border-left:1.2px solid #6db24c;"></div>
<span class="a t" style="left:401.3px;top:107px;color:#6db24c;">-</span>
<div class="a " style="left:430.3px;top:104.9px;width:35.2px;height:14.7px;background:#f5f5f5;border-left:1.2px solid #c4c4c4;"></div>
<span class="a t" style="left:437.4px;top:107px;color:#444;">-</span>
<span class="a t" style="left:27.5px;top:122px;letter-spacing:-0.38px;color:#3f8fd2;">CVE-2017-0146, CVE-2017-0145, CVE-2017-0143, CVE-2017-0144</span>
<span class="a t" style="left:27.5px;top:140px;letter-spacing:-0.12px;color:#999;">Remote code execution vulnerabilities exist in the way that the Microsoft Server Message Block 1.0</span>
<span class="a t" style="left:27.5px;top:155px;letter-spacing:-0.15px;color:#999;">(SMBv1) server handles certain requests. An attacker who successfully exploited the vulnerabilities…</span>
<div class="a " style="left:15.0px;top:178.5px;width:5.4px;height:10.3px;background:#c4674d;"></div>
<span class="a tb" style="left:27.5px;top:179px;color:#3f8fd2;letter-spacing:-0.51px;">Remote Code Execution<span class="cve" style="letter-spacing:-0.37px">CVE-2019-0708</span></span>
<div class="a " style="left:357.6px;top:177.6px;width:35.9px;height:14.7px;background:#fdf4e6;border-left:1.2px solid #e5a84a;"></div>
<span class="a t" style="left:365.8px;top:180px;color:#d9932e;">10</span>
<div class="a " style="left:394.2px;top:177.6px;width:35.4px;height:14.7px;background:#eaf7e4;border-left:1.2px solid #6db24c;"></div>
<span class="a t" style="left:401.3px;top:180px;color:#6db24c;">-</span>
<div class="a " style="left:430.3px;top:177.6px;width:35.2px;height:14.7px;background:#f5f5f5;border-left:1.2px solid #c4c4c4;"></div>
<span class="a t" style="left:437.4px;top:180px;color:#444;">-</span>
<span class="a t" style="left:27.5px;top:197px;letter-spacing:-0.12px;color:#999;">A remote code execution vulnerability exists in Remote Desktop Services – formerly known as</span>
<span class="a t" style="left:27.5px;top:212px;letter-spacing:-0.16px;color:#999;">Terminal Services – when an unauthenticated attacker connects to the target system using RDP and…</span>
<div class="a " style="left:15.0px;top:235.4px;width:5.4px;height:10.3px;background:#c4674d;"></div>
<span class="a tb" style="left:27.5px;top:236px;color:#3f8fd2;letter-spacing:-0.43px;">Referrals Processing Issue<span class="cve" style="letter-spacing:-0.36px">CVE-2020-8616</span></span>
<div class="a " style="left:357.6px;top:234.5px;width:35.9px;height:14.7px;background:#fdf4e6;border-left:1.2px solid #e5a84a;"></div>
<span class="a t" style="left:365.8px;top:237px;color:#d9932e;">1</span>
<div class="a " style="left:394.2px;top:234.5px;width:35.4px;height:14.7px;background:#eaf7e4;border-left:1.2px solid #6db24c;"></div>
<span class="a t" style="left:401.3px;top:237px;color:#6db24c;">-</span>
<div class="a " style="left:430.3px;top:234.5px;width:35.2px;height:14.7px;background:#f5f5f5;border-left:1.2px solid #c4c4c4;"></div>
<span class="a t" style="left:437.4px;top:237px;color:#444;">-</span>
<span class="a t" style="left:27.5px;top:254px;letter-spacing:-0.03px;color:#999;">A malicious actor who intentionally exploits this lack of effective limitation on the number of fetches</span>
<span class="a t" style="left:27.5px;top:269px;letter-spacing:-0.16px;color:#999;">performed when processing referrals can, through the use of specially crafted referrals, cause a…</span>
<div class="a " style="left:15.0px;top:292.4px;width:5.4px;height:10.3px;background:#c4674d;"></div>
<span class="a tb" style="left:27.5px;top:293px;color:#3f8fd2;letter-spacing:-0.51px;">Remote Code Execution<span class="cve" style="letter-spacing:-0.37px">CVE-2020-1350</span></span>
<div class="a " style="left:357.6px;top:291.5px;width:35.9px;height:14.7px;background:#e8f3fc;border-left:1.2px solid #4a93d6;"></div>
<span class="a t" style="left:365.8px;top:294px;color:#3f8fd2;">3</span>
<div class="a " style="left:394.2px;top:291.5px;width:35.4px;height:14.7px;background:#eaf7e4;border-left:1.2px solid #6db24c;"></div>
<span class="a t" style="left:401.3px;top:294px;color:#6db24c;">-</span>
<div class="a " style="left:430.3px;top:291.5px;width:35.2px;height:14.7px;background:#f5f5f5;border-left:1.2px solid #c4c4c4;"></div>
<span class="a t" style="left:437.4px;top:294px;color:#444;">-</span>
<span class="a t" style="left:27.5px;top:311px;letter-spacing:-0.18px;color:#999;">A remote code execution vulnerability exists in Windows Domain Name System servers when they fail</span>
<div class="a " style="left:479.4px;top:36.0px;width:15.4px;height:277.0px;background:#f1f1f1;"></div>
<svg class="a" style="left:482.1px;top:42.3px" width="8" height="5" viewBox="0 0 8 5"><path d="M0 4.5L4 .5l4 4z" fill="#a8a8a8"/></svg>
<div class="a " style="left:479.9px;top:53.0px;width:12.8px;height:86.8px;background:#c1c1c1;"></div>
<svg class="a" style="left:482.1px;top:301.5px" width="8" height="5" viewBox="0 0 8 5"><path d="M0 .5L4 4.5l4-4z" fill="#505050"/></svg>
</section>
<section class="card" style="left:761.2px;top:394px;width:243.4px;height:313px">
<header class="chd"></header>
<span class="a ttl" style="left:11.8px;top:9px;letter-spacing:-0.38px;color:#3a3a3a;">System configuration checks</span>
<span class="a t" style="right:23.6px;top:13px;color:#999;letter-spacing:-.35px;">17:26</span>
<i class="a kebab" style="left:230.0px;top:13.9px"></i>
<span class="a t" style="left:12.2px;top:46px;letter-spacing:0.01px;color:#3f8fd2;">Administration</span>
<span class="a t" style="left:103.6px;top:46px;letter-spacing:-0.04px;color:#3a3a3a;">0 of 2</span>
<div class="a " style="left:140.2px;top:49.4px;width:89.8px;height:6.4px;background:#eeeeee;"></div>
<span class="a t" style="left:12.2px;top:63px;letter-spacing:-0.02px;color:#3f8fd2;">Infrastructure</span>
<span class="a t" style="left:103.6px;top:63px;letter-spacing:-0.04px;color:#3a3a3a;">1 of 4</span>
<div class="a " style="left:140.2px;top:65.8px;width:89.8px;height:6.4px;background:#eeeeee;"></div>
<div class="a " style="left:140.2px;top:65.8px;width:21.7px;height:6.4px;background:#6db24c;background-image:repeating-linear-gradient(90deg,rgba(255,255,255,.35) 0 1px,transparent 1px 2px);background-size:100% 3px;background-position:0 2px;background-repeat:no-repeat;"></div>
</section>
<section class="card" style="left:1012.6px;top:394px;width:243.4px;height:313px">
<header class="chd"></header>
<span class="a ttl" style="left:11.8px;top:9px;letter-spacing:-0.41px;color:#3a3a3a;">Vulnerabilities without polici…</span>
<span class="a t" style="right:23.6px;top:13px;color:#999;letter-spacing:-.35px;">15:40</span>
<i class="a kebab" style="left:230.0px;top:13.9px"></i>
<span class="a h" style="left:12.2px;top:48px;letter-spacing:-0.15px;color:#3a3a3a;">Vulnerabilities marked as «danger»</span>
<span class="a t" style="left:12.2px;top:70px;letter-spacing:-0.19px;color:#3a3a3a;">High-value assets</span>
<span class="a t" style="left:124.9px;top:70px;letter-spacing:-0.13px;color:#3a3a3a;">Medium-value assets</span>
<div class="a " style="left:12.2px;top:82.0px;width:106.5px;height:86.6px;background:#f5f5f5;border-radius:2px;"></div>
<span class="a n22" style="left:17.9px;top:87px;color:#4a4a4a;-webkit-text-stroke:.55px #f5f5f5;">0</span>
<span class="a t" style="right:130.5px;top:86px;color:#444;">0</span>
<svg class="a" style="left:93.6px;top:88.1px" width="12" height="10" viewBox="0 0 12 10"><rect x="0.55" y="0.55" width="10.1" height="6.7" rx="0.9" fill="none" stroke="#a3a4a6" stroke-width="1"/><path d="M3 9.2h5.2" stroke="#a3a4a6" stroke-width=".9"/><path d="M4.6 7.4l-.4 1.5h2.8l-.4-1.5z" fill="#a3a4a6"/></svg>
<div class="a " style="left:124.9px;top:82.0px;width:106.5px;height:86.6px;background:#f5f5f5;border-radius:2px;"></div>
<span class="a n22" style="left:130.6px;top:87px;color:#4a4a4a;-webkit-text-stroke:.55px #f5f5f5;">0</span>
<span class="a t" style="right:17.8px;top:86px;color:#444;">0</span>
<svg class="a" style="left:206.4px;top:88.1px" width="12" height="10" viewBox="0 0 12 10"><rect x="0.55" y="0.55" width="10.1" height="6.7" rx="0.9" fill="none" stroke="#a3a4a6" stroke-width="1"/><path d="M3 9.2h5.2" stroke="#a3a4a6" stroke-width=".9"/><path d="M4.6 7.4l-.4 1.5h2.8l-.4-1.5z" fill="#a3a4a6"/></svg>
<span class="a h" style="left:12.2px;top:181px;letter-spacing:-0.11px;color:#3a3a3a;">Critical vulnerabilities</span>
<span class="a t" style="left:12.2px;top:203px;letter-spacing:-0.19px;color:#3a3a3a;">High-value assets</span>
<span class="a t" style="left:124.9px;top:203px;letter-spacing:-0.13px;color:#3a3a3a;">Medium-value assets</span>
<div class="a " style="left:12.2px;top:215.3px;width:106.5px;height:85.3px;background:#f5f5f5;border-radius:2px;"></div>
<span class="a n22" style="left:17.9px;top:220px;color:#4a4a4a;-webkit-text-stroke:.55px #f5f5f5;">0</span>
<span class="a t" style="right:130.5px;top:219px;color:#444;">0</span>
<svg class="a" style="left:93.6px;top:220.5px" width="12" height="10" viewBox="0 0 12 10"><rect x="0.55" y="0.55" width="10.1" height="6.7" rx="0.9" fill="none" stroke="#a3a4a6" stroke-width="1"/><path d="M3 9.2h5.2" stroke="#a3a4a6" stroke-width=".9"/><path d="M4.6 7.4l-.4 1.5h2.8l-.4-1.5z" fill="#a3a4a6"/></svg>
<svg class="a" style="left:19.2px;top:265.7px" width="92.1" height="13.9"><path d="M0 12.9H13.7L27.5 0H84.1L92.1 12.9z" fill="#cccccc"/><path d="M0 12.6H92.1" stroke="#cccccc" stroke-width=".7"/></svg>
<div class="a " style="left:124.9px;top:215.3px;width:106.5px;height:85.3px;background:#fdf4e6;border-radius:2px;"></div>
<span class="a n22" style="left:130.6px;top:220px;color:#d9932e;-webkit-text-stroke:.55px #fdf4e6;letter-spacing:0;">3.9 K</span>
<span class="a t" style="left:187.8px;top:232px;color:#d9932e;">+3933</span>
<span class="a t" style="right:17.8px;top:219px;color:#444;">25</span>
<svg class="a" style="left:200.9px;top:220.5px" width="12" height="10" viewBox="0 0 12 10"><rect x="0.55" y="0.55" width="10.1" height="6.7" rx="0.9" fill="none" stroke="#a3a4a6" stroke-width="1"/><path d="M3 9.2h5.2" stroke="#a3a4a6" stroke-width=".9"/><path d="M4.6 7.4l-.4 1.5h2.8l-.4-1.5z" fill="#a3a4a6"/></svg>
<svg class="a" style="left:131.4px;top:259.6px" width="92.9" height="14.0"><path d="M0 13.0H15.0L28.3 0H92.9V13.0z" fill="#f2d49c"/><path d="M0 12.7H92.9" stroke="#f2d49c" stroke-width=".7"/></svg>
<span class="a t" style="left:131.4px;top:281px;color:#3a3a3a;">3.9 K</span>
<span class="a bdg" style="left:157.1px;top:279.1px;width:17.6px;height:14.7px;border-color:#d9932e;color:#d9932e;">N</span>
</section>
<div class="a" style="left:6.5px;top:713.6px;width:244px;height:12px;border:1px solid #b9b9b9;border-radius:2px;background:#f0f0f0"></div>
<div class="a" style="left:1263px;top:66px;width:17px;height:654px;background:#f1f1f1"></div>
<svg class="a" style="left:1267.6px;top:72.4px" width="8" height="5" viewBox="0 0 8 5"><path d="M.2 4.6L3.9.5l3.7 4.1z" fill="#a5a0a0"/></svg>
<div class="a " style="left:1265.0px;top:83.0px;width:13.0px;height:418.0px;background:#c1c1c1;"></div>
<svg class="a" style="left:1267.5px;top:708.5px" width="8" height="5" viewBox="0 0 8 5"><path d="M0 .5L4 4.5l4-4z" fill="#505050"/></svg>
</body></html>
